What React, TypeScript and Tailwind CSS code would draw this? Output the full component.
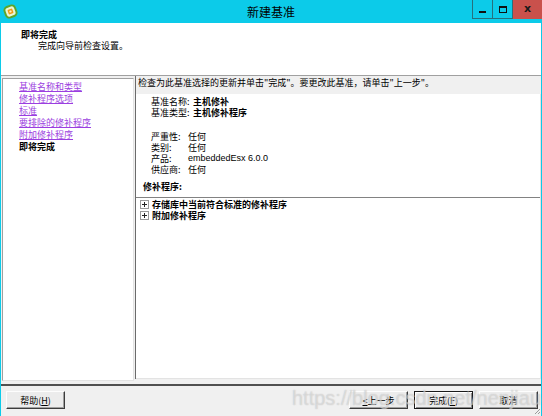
import React from "react";

const cjk = { fontFamily: '"Noto Sans CJK SC", "Noto Sans", sans-serif' };

const links = ["基准名称和类型", "修补程序选项", "标准", "要排除的修补程序", "附加修补程序"];

const details = [
  { label: "严重性:", value: "任何" },
  { label: "类别:", value: "任何" },
  { label: "产品:", value: "embeddedEsx 6.0.0", latin: true },
  { label: "供应商:", value: "任何" },
];

const AppIcon = () => (
  <svg width="15" height="15" viewBox="0 0 15 15">
    <rect x="2" y="2" width="11" height="11" rx="3.5" fill="#e9f7d8" stroke="#5da52a" strokeWidth="2" transform="rotate(-20 7.5 7.5)" />
    <rect x="5" y="5" width="5" height="5" rx="1" fill="#f39a16" transform="rotate(-20 7.5 7.5)" />
    <rect x="6.5" y="6.5" width="2" height="2" fill="#fff3c4" transform="rotate(-20 7.5 7.5)" />
  </svg>
);

const PlusBox = () => (
  <svg width="9" height="9" viewBox="0 0 9 9" className="shrink-0">
    <rect x="0.5" y="0.5" width="8" height="8" fill="#fff" stroke="#9a9a9a" />
    <path d="M2 4.5h5M4.5 2v5" stroke="#222" strokeWidth="1" />
  </svg>
);

const Button = ({ children, isDefault }: { children: React.ReactNode; isDefault?: boolean }) => (
  <button
    className={
      "h-[18px] w-[59px] flex items-center justify-center text-[9px] leading-none text-black bg-[#ececec] border whitespace-nowrap " +
      (isDefault
        ? "border-[#1a1a1a] shadow-[inset_1px_1px_0_#ffffff,inset_-1px_-1px_0_#8a8a8a]"
        : "border-t-[#fdfdfd] border-l-[#fdfdfd] border-b-[#3c3c3c] border-r-[#3c3c3c] shadow-[inset_-1px_-1px_0_#a0a0a0]")
    }
  >
    {children}
  </button>
);

export default function App() {
  return (
    <div className="w-[542px] h-[416px] flex flex-col bg-[#f0f0f0] relative overflow-hidden text-black" style={cjk}>
      {/* title bar */}
      <div className="h-[23px] shrink-0 bg-[#0ccbe9] flex items-start relative">
        <div className="pl-[3px] pt-[4px]">
          <AppIcon />
        </div>
        <div className="absolute inset-x-0 top-0 h-[23px] flex items-center justify-center text-[12px] pointer-events-none">
          新建基准
        </div>
        <div className="ml-auto flex h-[19px]">
          <div className="w-[21px] border border-[#26707d] border-t-0 flex items-end justify-center pb-[5px]">
            <div className="w-[7px] h-[2px] bg-[#111]" />
          </div>
          <div className="w-[20px] border-b border-r border-[#26707d] flex items-center justify-center">
            <div className="w-[8px] h-[7px] border border-[#111] border-t-2" />
          </div>
          <div className="w-[29px] bg-[#c9514c] flex items-center justify-center text-[11px] font-bold text-[#1a1a1a]" style={{ fontFamily: '"DejaVu Sans", sans-serif' }}>
            x
          </div>
        </div>
      </div>

      <div className="flex-1 flex flex-col border-l border-r border-[#0ccbe9]">
        {/* header */}
        <div className="h-[53px] shrink-0 bg-white border-b border-[#a0a0a0] pt-[6px] pl-[20px] text-[9px] leading-[11px]">
          <div className="font-bold">即将完成</div>
          <div className="pl-[17px]">完成向导前检查设置。</div>
        </div>

        {/* content */}
        <div className="flex-1 flex min-h-0 pb-[5px]">
          <div className="w-[132px] shrink-0 mt-[2px] mb-[-2px] ml-[1px] bg-white border border-t-[#a0a0a0] border-l-[#a0a0a0] border-r-[#e3e3e3] border-b-[#e3e3e3] pt-[2px] pl-[16px] text-[9px] leading-[12px]">
            {links.map((l) => (
              <div key={l} className="underline text-[#9b3ee0]">
                {l}
              </div>
            ))}
            <div className="font-bold">即将完成</div>
          </div>

          <div className="flex-1 flex flex-col ml-[1px] border-l border-[#6b6b6b] text-[9px]">
            <div className="h-[18px] shrink-0 pl-[2px] pt-[1px] leading-[12px] whitespace-nowrap">
              检查为此基准选择的更新并单击"完成"。要更改此基准，请单击"上一步"。
            </div>
            <div className="flex-1 flex flex-col bg-white border-r border-[#e3e3e3]">
              <div className="pl-[15px] pt-[2px] leading-[11px] whitespace-nowrap">
                <div className="flex">
                  <span className="w-[42px] shrink-0">基准名称:</span>
                  <span className="font-bold">主机修补</span>
                </div>
                <div className="flex">
                  <span className="w-[42px] shrink-0">基准类型:</span>
                  <span className="font-bold">主机修补程序</span>
                </div>
                <div className="mt-[13px]">
                  {details.map((d) => (
                    <div key={d.label} className="flex">
                      <span className="w-[37px] shrink-0">{d.label}</span>
                      <span
                        className={d.latin ? "text-[9px]" : ""}
                        style={d.latin ? { fontFamily: '"Liberation Sans", sans-serif' } : undefined}
                      >
                        {d.value}
                      </span>
                    </div>
                  ))}
                </div>
              </div>
              <div className="pl-[7px] mt-[6px] font-bold leading-[11px]">修补程序:</div>
              <div className="flex-1 mt-[5px] border-t border-[#828282] border-b border-b-[#e3e3e3] pt-[1px] pl-[4px] font-bold leading-[11px] whitespace-nowrap">
                <div className="flex items-center gap-[3px]">
                  <PlusBox />
                  <span>存储库中当前符合标准的修补程序</span>
                </div>
                <div className="flex items-center gap-[3px]">
                  <PlusBox />
                  <span>附加修补程序</span>
                </div>
              </div>
            </div>
          </div>
        </div>

        {/* footer */}
        <div className="h-[32px] shrink-0 border-t-2 border-[#505050] flex items-start pt-[5px] pl-[5px] pr-[3px]">
          <Button>
            帮助(<span className="underline">H</span>)
          </Button>
          <div className="ml-auto flex gap-[6px]">
            <Button>
              <span className="underline">&lt;</span>上一步
            </Button>
            <Button isDefault>
              完成(<span className="underline">F</span>)
            </Button>
            <Button>取消</Button>
          </div>
        </div>
      </div>

      {/* watermark */}
      <div
        className="absolute left-[292px] top-[386px] text-[20px] leading-[24px] text-white/40 pointer-events-none [text-shadow:0_0_1px_rgba(150,150,150,0.6)]"
        style={{ fontFamily: '"Liberation Sans", sans-serif' }}
      >
        https://blog.csdn.net/nenjiaue
      </div>

      {/* resize grip */}
      <svg width="7" height="7" viewBox="0 0 7 7" className="absolute right-[1px] bottom-[1px]">
        <path d="M6 1L1 6M6 4L4 6" stroke="#9a9a9a" strokeWidth="1" />
      </svg>
    </div>
  );
}
